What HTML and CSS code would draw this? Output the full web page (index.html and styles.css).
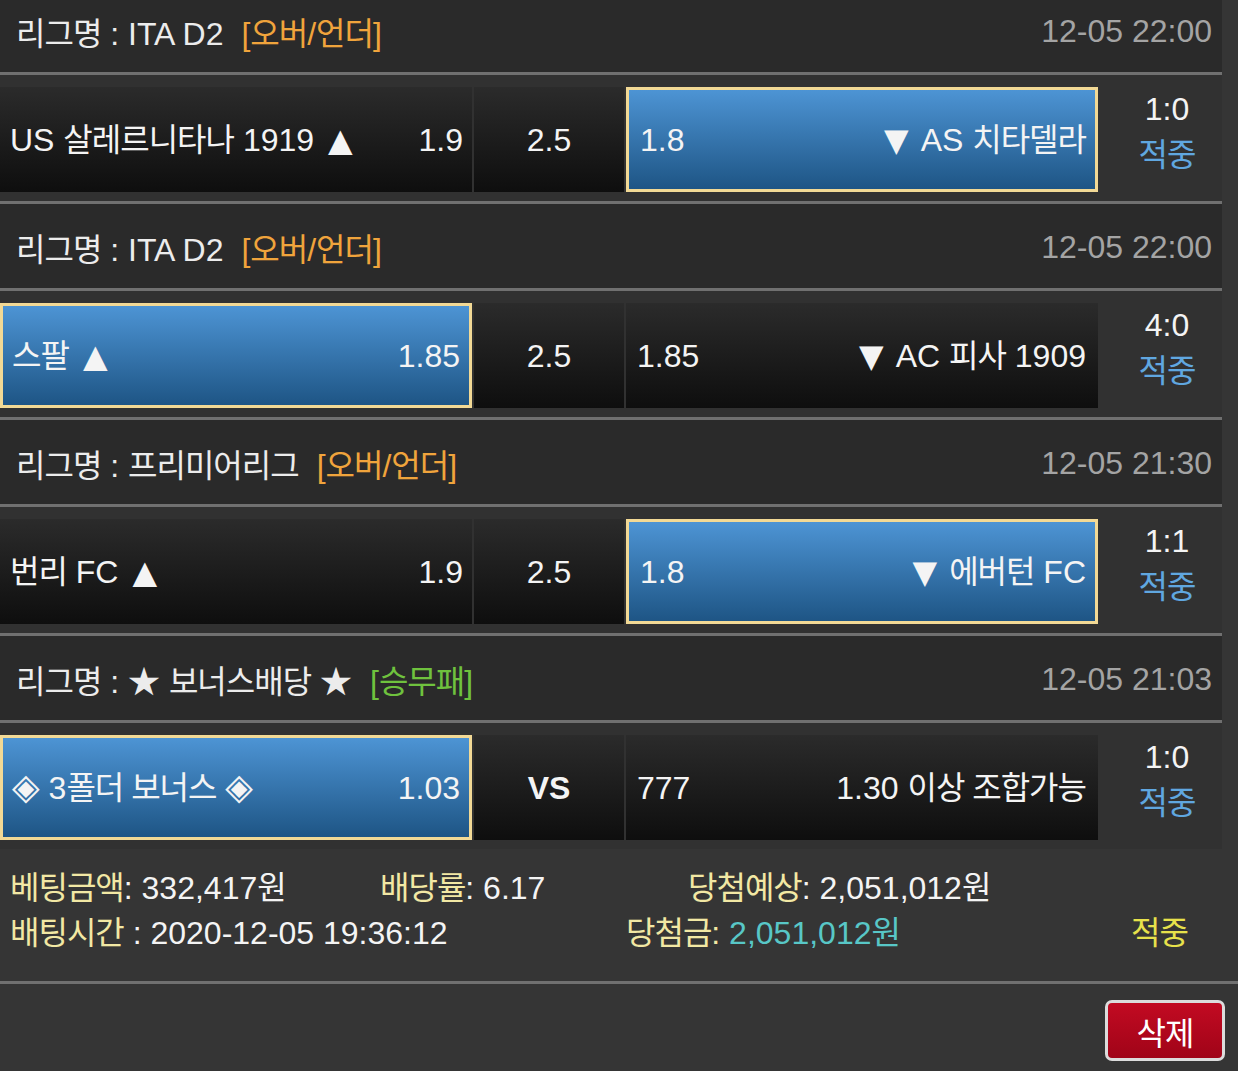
FILE: index.html
```html
<!DOCTYPE html>
<html lang="ko">
<head>
<meta charset="utf-8">
<title>베팅내역</title>
<link rel="stylesheet" href="styles.css">
</head>
<body>
<div class="list">
  <section class="match">
    <div class="league">
      <span class="lname"><span class="k">리그명</span> : ITA D2</span>
      <span class="tag orange">[<span class="k">오버</span>/<span class="k">언더</span>]</span>
      <span class="date">12-05 22:00</span>
    </div>
    <div class="bet">
      <div class="cell home"><div class="line"><span>US <span class="k">살레르니타나</span> 1919<span class="tri up">▲</span></span><span>1.9</span></div></div>
      <div class="cell mid"><div class="line">2.5</div></div>
      <div class="cell away sel"><div class="line"><span>1.8</span><span><span class="tri dn">▼</span>AS <span class="k">치타델라</span></span></div></div>
      <div class="score"><span>1:0</span><span class="hit k">적중</span></div>
    </div>
  </section>

  <section class="match">
    <div class="league">
      <span class="lname"><span class="k">리그명</span> : ITA D2</span>
      <span class="tag orange">[<span class="k">오버</span>/<span class="k">언더</span>]</span>
      <span class="date">12-05 22:00</span>
    </div>
    <div class="bet">
      <div class="cell home sel"><div class="line"><span><span class="k">스팔</span><span class="tri up">▲</span></span><span>1.85</span></div></div>
      <div class="cell mid"><div class="line">2.5</div></div>
      <div class="cell away"><div class="line"><span>1.85</span><span><span class="tri dn">▼</span>AC <span class="k">피사</span> 1909</span></div></div>
      <div class="score"><span>4:0</span><span class="hit k">적중</span></div>
    </div>
  </section>

  <section class="match">
    <div class="league">
      <span class="lname"><span class="k">리그명</span> : <span class="k">프리미어리그</span></span>
      <span class="tag orange">[<span class="k">오버</span>/<span class="k">언더</span>]</span>
      <span class="date">12-05 21:30</span>
    </div>
    <div class="bet">
      <div class="cell home"><div class="line"><span><span class="k">번리</span> FC<span class="tri up">▲</span></span><span>1.9</span></div></div>
      <div class="cell mid"><div class="line">2.5</div></div>
      <div class="cell away sel"><div class="line"><span>1.8</span><span><span class="tri dn">▼</span><span class="k">에버턴</span> FC</span></div></div>
      <div class="score"><span>1:1</span><span class="hit k">적중</span></div>
    </div>
  </section>

  <section class="match last">
    <div class="league">
      <span class="lname"><span class="k">리그명</span> : ★ <span class="k">보너스배당</span> ★</span>
      <span class="tag green">[<span class="k">승무패</span>]</span>
      <span class="date">12-05 21:03</span>
    </div>
    <div class="bet">
      <div class="cell home sel"><div class="line"><span><span class="dia">◈</span> 3<span class="k">폴더 보너스</span> <span class="dia">◈</span></span><span>1.03</span></div></div>
      <div class="cell mid vs"><div class="line">VS</div></div>
      <div class="cell away"><div class="line"><span>777</span><span>1.30 <span class="k">이상 조합가능</span></span></div></div>
      <div class="score"><span>1:0</span><span class="hit k">적중</span></div>
    </div>
  </section>
</div>

<div class="summary">
  <div class="srow">
    <span class="c1"><span class="lbl k">베팅금액</span>: 332,417<span class="k">원</span></span>
    <span class="c2"><span class="lbl k">배당률</span>: 6.17</span>
    <span class="c3"><span class="lbl k">당첨예상</span>: 2,051,012<span class="k">원</span></span>
  </div>
  <div class="srow">
    <span class="c1w"><span class="lbl k">배팅시간</span> : 2020-12-05 19:36:12</span>
    <span class="c2w"><span class="lbl k">당첨금</span><span class="lbl">:</span> <span class="win">2,051,012<span class="k">원</span></span></span>
    <span class="result k">적중</span>
  </div>
</div>

<div class="actions">
  <button class="del k" type="button">삭제</button>
</div>
</body>
</html>
```

FILE: styles.css
```css
* {
  box-sizing: border-box;
}

body {
  margin: 0;
  background: #353535;
  font-family: "Liberation Sans", "Noto Sans CJK KR", "DejaVu Sans", sans-serif;
  font-size: 32px;
  color: #f4f4f4;
  overflow: hidden;
}

.k {
  letter-spacing: -1px;
}

.tri {
  font-family: "DejaVu Sans", sans-serif;
  font-size: 32px;
}

.tri.up {
  margin-left: 14px;
}

.tri.dn {
  margin-right: 12px;
}

.dia {
  font-family: "DejaVu Sans", sans-serif;
  font-size: 36px;
}

.list {
  width: 1222px;
  margin-top: -12px;
}

.league {
  height: 87px;
  display: flex;
  align-items: center;
  padding: 2px 10px 0 16px;
  background: #2a2a2a;
  border-bottom: 3px solid #707070;
  white-space: nowrap;
}

.lname {
  color: #ececec;
}

.tag {
  margin-left: 18px;
}

.orange {
  color: #f0a43c;
}

.green {
  color: #6fc23e;
}

.date {
  margin-left: auto;
  color: #a4a4a4;
}

.bet {
  height: 129px;
  display: flex;
  align-items: stretch;
  padding: 12px 0 9px 0;
  background: #313131;
  border-bottom: 3px solid #707070;
}

.match.last .bet {
  height: 126px;
  border-bottom: 0;
}

.cell {
  flex: none;
  display: flex;
  align-items: center;
  background: linear-gradient(#2b2b2b, #0e0e0e);
  white-space: nowrap;
}

.line {
  width: 100%;
  display: flex;
  align-items: baseline;
  justify-content: space-between;
  line-height: 36px;
}

.home {
  width: 472px;
  padding: 0 9px 0 10px;
}

.mid {
  width: 150px;
  margin: 0 2px;
}

.mid .line {
  justify-content: center;
}

.away {
  width: 472px;
  padding: 0 12px 0 11px;
}

.cell.sel {
  background: linear-gradient(#4d94d4, #1e5585);
  border: 3px solid #f2d995;
}

.home.sel {
  padding: 0 9px 0 9px;
}

.away.sel {
  padding: 0 9px 0 11px;
}

.vs {
  font-weight: bold;
}

.score {
  flex: none;
  width: 124px;
  display: flex;
  flex-direction: column;
  align-items: center;
  justify-content: center;
  line-height: 46px;
  padding: 0 0 15px 14px;
}

.hit {
  color: #60a7e0;
}

.summary {
  padding: 13px 0 29px 10px;
  border-bottom: 3px solid #707070;
  height: 135px;
}

.srow {
  display: flex;
  height: 45px;
  align-items: center;
  white-space: nowrap;
}

.lbl {
  color: #f2e8a4;
}

.c1 {
  width: 370px;
}

.c2 {
  width: 308px;
}

.c1w {
  width: 616px;
}

.c2w {
  width: 505px;
}

.win {
  color: #58c7c7;
}

.result {
  color: #e7e14b;
}

.actions {
  display: flex;
  justify-content: flex-end;
  padding: 16px 13px 0 0;
}

.del {
  width: 120px;
  height: 61px;
  border: 3px solid #dcdcdc;
  border-radius: 7px;
  background: linear-gradient(#c20a22, #a00418);
  color: #fff;
  font-family: inherit;
  font-size: 32px;
  padding: 0;
}
```
